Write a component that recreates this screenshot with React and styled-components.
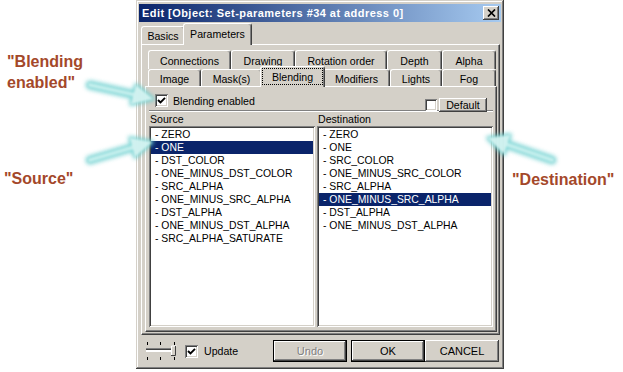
import React from "react";
import styled, { createGlobalStyle, css } from "styled-components";

const face = "#d4d0c8";
const uiFont = `"Liberation Sans", Arial, sans-serif`;

const GlobalStyle = createGlobalStyle`
  html, body { margin: 0; padding: 0; background: #ffffff; }
  body { font-family: ${uiFont}; }
`;

const raised = css`
  box-shadow: inset -1px -1px #404040, inset 1px 1px #ffffff,
    inset -2px -2px #808080, inset 2px 2px ${face};
`;

const sunken = css`
  box-shadow: inset 1px 1px #808080, inset -1px -1px #ffffff,
    inset 2px 2px #404040, inset -2px -2px ${face};
`;

const Page = styled.div`
  position: relative;
  width: 623px;
  height: 372px;
  display: flex;
  overflow: hidden;
`;

const LeftNotes = styled.div`
  width: 136px;
  flex: none;
  padding-top: 51px;
  box-sizing: border-box;
`;

const RightNotes = styled.div`
  flex: 1;
  padding: 169px 0 0 8px;
`;

const Note = styled.div`
  font: bold 16px/21px ${uiFont};
  color: #a4482a;
  margin-left: ${(p) => p.$indent || 0}px;
  margin-top: ${(p) => p.$top || 0}px;
  white-space: nowrap;
`;

const Dialog = styled.div`
  width: 368px;
  height: 369px;
  flex: none;
  box-sizing: border-box;
  background: ${face};
  padding: 4px 3px 3px 3px;
  box-shadow: inset -1px -1px #404040, inset 1px 1px ${face},
    inset -2px -2px #808080, inset 2px 2px #ffffff;
  display: flex;
  flex-direction: column;
  font: 10.6px ${uiFont};
  color: #000;
`;

const TitleBar = styled.div`
  height: 18px;
  flex: none;
  display: flex;
  align-items: center;
  padding: 0 2px 0 3px;
  background: linear-gradient(to right, #0a246a, #a6caf0);
  color: #fff;
  font: bold 11px ${uiFont};
  letter-spacing: 0.45px;
`;

const TitleText = styled.span`
  flex: 1;
  white-space: nowrap;
`;

const CloseButton = styled.div`
  width: 16px;
  height: 14px;
  background: ${face};
  ${raised};
  display: flex;
  align-items: center;
  justify-content: center;
`;

const TabStrip = styled.div`
  height: ${(p) => p.$h}px;
  flex: none;
  display: flex;
  align-items: flex-end;
  padding-left: ${(p) => p.$pad || 0}px;
`;

const Tab = styled.div`
  box-sizing: border-box;
  width: ${(p) => p.$w}px;
  height: ${(p) => p.$h}px;
  flex: none;
  display: flex;
  align-items: center;
  justify-content: center;
  background: ${face};
  border-top: 1px solid #ffffff;
  border-left: 1px solid #ffffff;
  border-right: 1px solid #404040;
  box-shadow: inset -1px 0 #808080;
  border-radius: 3px 3px 0 0;
  white-space: nowrap;
  position: relative;
  padding-top: 1px;
  ${(p) =>
    p.$active &&
    css`
      z-index: 2;
      width: ${p.$w + 4}px;
      height: ${p.$h + 4}px;
      margin: 0 -2px -1px -2px;
      padding-bottom: 2px;
    `}
`;

const FocusLabel = styled.span`
  align-self: stretch;
  flex: 1;
  margin: 0 1px;
  display: flex;
  align-items: center;
  justify-content: center;
  border: 1px dotted #000;
`;

const Panel = styled.div`
  box-sizing: border-box;
  background: ${face};
  border-top: 1px solid #ffffff;
  border-left: 1px solid #ffffff;
  border-right: 1px solid #404040;
  border-bottom: 1px solid #404040;
  box-shadow: inset -1px -1px #808080;
  display: flex;
  flex-direction: column;
  flex: 1;
  min-height: 0;
`;

const OuterPanel = styled(Panel)`
  margin: 0 1px 0 2px;
  padding: 5px 2px 2px 3px;
`;

const InnerPanel = styled(Panel)`
  padding: 0 3px 4px 3px;
`;

const Header = styled.div`
  height: 23px;
  flex: none;
  display: flex;
  justify-content: space-between;
  border-bottom: 1px solid #808080;
  box-shadow: 0 1px 0 #ffffff;
`;

const CheckRow = styled.label`
  display: flex;
  align-items: center;
  gap: ${(p) => p.$gap || 5}px;
  margin: ${(p) => p.$margin || 0};
  align-self: ${(p) => p.$align || "auto"};
  white-space: nowrap;
`;

const Box = styled.span`
  width: ${(p) => p.$size || 13}px;
  height: ${(p) => p.$size || 13}px;
  flex: none;
  background: #fff;
  ${sunken};
  display: flex;
  align-items: center;
  justify-content: center;
`;

const SmallButton = styled.div`
  width: 48px;
  height: 14px;
  box-sizing: border-box;
  background: ${face};
  ${raised};
  display: flex;
  align-items: center;
  justify-content: center;
  padding-bottom: 1px;
`;

const Labels = styled.div`
  display: grid;
  grid-template-columns: 166px 1fr;
  column-gap: 2px;
  height: 15px;
  flex: none;
  align-items: end;
  padding-left: 1px;
  line-height: 13px;
`;

const Lists = styled.div`
  flex: 1;
  display: grid;
  grid-template-columns: 166px 1fr;
  column-gap: 2px;
  min-height: 0;
`;

const ListBox = styled.div`
  background: #fff;
  ${sunken};
  padding: 2px;
  font-size: 10.4px;
`;

const Item = styled.div`
  height: 13px;
  line-height: 13px;
  padding-left: 4px;
  white-space: nowrap;
  background: ${(p) => (p.$selected ? "#0a246a" : "transparent")};
  color: ${(p) => (p.$selected ? "#ffffff" : "#000000")};
`;

const BottomBar = styled.div`
  height: 31px;
  flex: none;
  display: flex;
  align-items: center;
  padding: 1px 2px 0 7px;
  box-sizing: border-box;
`;

const Buttons = styled.div`
  margin-left: auto;
  display: flex;
  gap: ${(p) => p.$gap}px;
`;

const Button = styled.div`
  width: 74px;
  height: 22px;
  box-sizing: border-box;
  background: ${face};
  display: flex;
  align-items: center;
  justify-content: center;
  font-size: 11px;
  ${raised};
  ${(p) =>
    p.$default &&
    css`
      border: 1px solid #000;
      box-shadow: inset -1px -1px #404040, inset 1px 1px #ffffff,
        inset -2px -2px #808080;
    `}
  ${(p) =>
    p.$disabled &&
    css`
      color: #808080;
      text-shadow: 1px 1px 0 #ffffff;
    `}
`;

const ButtonGroup = styled.div`
  display: flex;
`;

const Overlay = styled.svg`
  position: absolute;
  left: 0;
  top: 0;
  pointer-events: none;
`;

const CheckMark = () => (
  <svg width="9" height="9" viewBox="0 0 9 9">
    <path d="M1 4 L3.5 6.5 L8 1.8" fill="none" stroke="#000" strokeWidth="1.9" />
  </svg>
);

const CloseIcon = () => (
  <svg width="9" height="8" viewBox="0 0 9 8">
    <path d="M1 0.5 L8 7.5 M8 0.5 L1 7.5" stroke="#000" strokeWidth="1.7" />
  </svg>
);

const SliderIcon = () => (
  <svg width="31" height="18" viewBox="0 0 31 18">
    <g fill="#000">
      <rect x="1" y="0" width="1" height="3" />
      <rect x="14" y="0" width="1" height="3" />
      <rect x="28" y="0" width="1" height="3" />
      <rect x="1" y="15" width="1" height="3" />
      <rect x="14" y="15" width="1" height="3" />
      <rect x="28" y="15" width="1" height="3" />
    </g>
    <rect x="0" y="6" width="27" height="1" fill="#808080" />
    <rect x="0" y="7" width="27" height="1" fill="#404040" />
    <rect x="0" y="8" width="27" height="1" fill="#ffffff" />
    <rect x="0" y="9" width="27" height="1" fill="#ffffff" />
    <rect x="25" y="4" width="5" height="10" fill={face} />
    <path d="M25 14 V4 H30" fill="none" stroke="#ffffff" strokeWidth="1" transform="translate(0.5 0)" />
    <path d="M25 13.5 H29.5 V4" fill="none" stroke="#404040" strokeWidth="1" />
  </svg>
);

const Arrow = ({ tail, tip, base1, base2 }) => (
  <g>
    <g filter="url(#glow)" opacity="0.85">
      <line x1={tail[0]} y1={tail[1]} x2={(base1[0] + base2[0]) / 2} y2={(base1[1] + base2[1]) / 2} stroke="#6ccfcf" strokeWidth="9" strokeLinecap="round" />
      <polygon points={`${tip} ${base1} ${base2}`} fill="#6ccfcf" stroke="#6ccfcf" strokeWidth="4" strokeLinejoin="round" />
    </g>
    <g filter="url(#soft)" opacity="0.9">
      <line x1={tail[0]} y1={tail[1]} x2={(base1[0] + base2[0]) / 2} y2={(base1[1] + base2[1]) / 2} stroke="#c9f1ef" strokeWidth="4" strokeLinecap="round" />
      <polygon points={`${tip} ${base1} ${base2}`} fill="#d9f5f3" />
    </g>
  </g>
);

const sourceItems = [
  "ZERO",
  "ONE",
  "DST_COLOR",
  "ONE_MINUS_DST_COLOR",
  "SRC_ALPHA",
  "ONE_MINUS_SRC_ALPHA",
  "DST_ALPHA",
  "ONE_MINUS_DST_ALPHA",
  "SRC_ALPHA_SATURATE",
];

const destItems = [
  "ZERO",
  "ONE",
  "SRC_COLOR",
  "ONE_MINUS_SRC_COLOR",
  "SRC_ALPHA",
  "ONE_MINUS_SRC_ALPHA",
  "DST_ALPHA",
  "ONE_MINUS_DST_ALPHA",
];

const backRow = [
  ["Connections", 83],
  ["Drawing", 64],
  ["Rotation order", 92],
  ["Depth", 55],
  ["Alpha", 54],
];

const frontRow = [
  ["Image", 53],
  ["Mask(s)", 61],
  ["Blending", 61],
  ["Modifiers", 67],
  ["Lights", 52],
  ["Fog", 54],
];

export default function App() {
  return (
    <Page>
      <GlobalStyle />
      <LeftNotes>
        <Note $indent={7}>
          "Blending
          <br />
          enabled"
        </Note>
        <Note $indent={4} $top={75}>
          "Source"
        </Note>
      </LeftNotes>

      <Dialog>
        <TitleBar>
          <TitleText>Edit [Object: Set-parameters #34 at address 0]</TitleText>
          <CloseButton>
            <CloseIcon />
          </CloseButton>
        </TitleBar>

        <TabStrip $h={22} $pad={2}>
          <Tab $w={44} $h={18}>Basics</Tab>
          <Tab $w={65} $h={18} $active>
            Parameters
          </Tab>
        </TabStrip>

        <OuterPanel>
          <TabStrip $h={19} $pad={3}>
            {backRow.map(([name, w]) => (
              <Tab key={name} $w={w} $h={19}>
                {name}
              </Tab>
            ))}
          </TabStrip>
          <TabStrip $h={17} $pad={3}>
            {frontRow.map(([name, w]) =>
              name === "Blending" ? (
                <Tab key={name} $w={w} $h={17} $active>
                  <FocusLabel>{name}</FocusLabel>
                </Tab>
              ) : (
                <Tab key={name} $w={w} $h={17}>
                  {name}
                </Tab>
              )
            )}
          </TabStrip>

          <InnerPanel>
            <Header>
              <CheckRow $margin="7px 0 0 6px" $align="flex-start">
                <Box>
                  <CheckMark />
                </Box>
                Blending enabled
              </CheckRow>
              <CheckRow $gap={2} $margin="0 6px -2px 0" $align="flex-end">
                <Box $size={12} />
                <SmallButton>Default</SmallButton>
              </CheckRow>
            </Header>

            <Labels>
              <span>Source</span>
              <span>Destination</span>
            </Labels>

            <Lists>
              <ListBox>
                {sourceItems.map((it) => (
                  <Item key={it} $selected={it === "ONE"}>
                    - {it}
                  </Item>
                ))}
              </ListBox>
              <ListBox>
                {destItems.map((it) => (
                  <Item key={it} $selected={it === "ONE_MINUS_SRC_ALPHA"}>
                    - {it}
                  </Item>
                ))}
              </ListBox>
            </Lists>
          </InnerPanel>
        </OuterPanel>

        <BottomBar>
          <SliderIcon />
          <CheckRow $gap={6} $margin="0 0 0 8px">
            <Box>
              <CheckMark />
            </Box>
            Update
          </CheckRow>
          <Buttons $gap={4}>
            <Button $default $disabled>
              Undo
            </Button>
            <ButtonGroup>
              <Button $default>OK</Button>
              <Button>CANCEL</Button>
            </ButtonGroup>
          </Buttons>
        </BottomBar>
      </Dialog>

      <RightNotes>
        <Note>"Destination"</Note>
      </RightNotes>

      <Overlay width="623" height="372" viewBox="0 0 623 372">
        <defs>
          <filter id="glow" x="-20%" y="-50%" width="140%" height="200%">
            <feGaussianBlur stdDeviation="2.2" />
          </filter>
          <filter id="soft" x="-20%" y="-50%" width="140%" height="200%">
            <feGaussianBlur stdDeviation="1" />
          </filter>
        </defs>
        <Arrow tail={[90, 85]} tip={[153, 99]} base1={[131, 104]} base2={[136, 85]} />
        <Arrow tail={[90, 160]} tip={[152, 142]} base1={[135, 157]} base2={[130, 138]} />
        <Arrow tail={[552, 160]} tip={[488, 138]} base1={[510, 135]} base2={[504, 154]} />
      </Overlay>
    </Page>
  );
}
